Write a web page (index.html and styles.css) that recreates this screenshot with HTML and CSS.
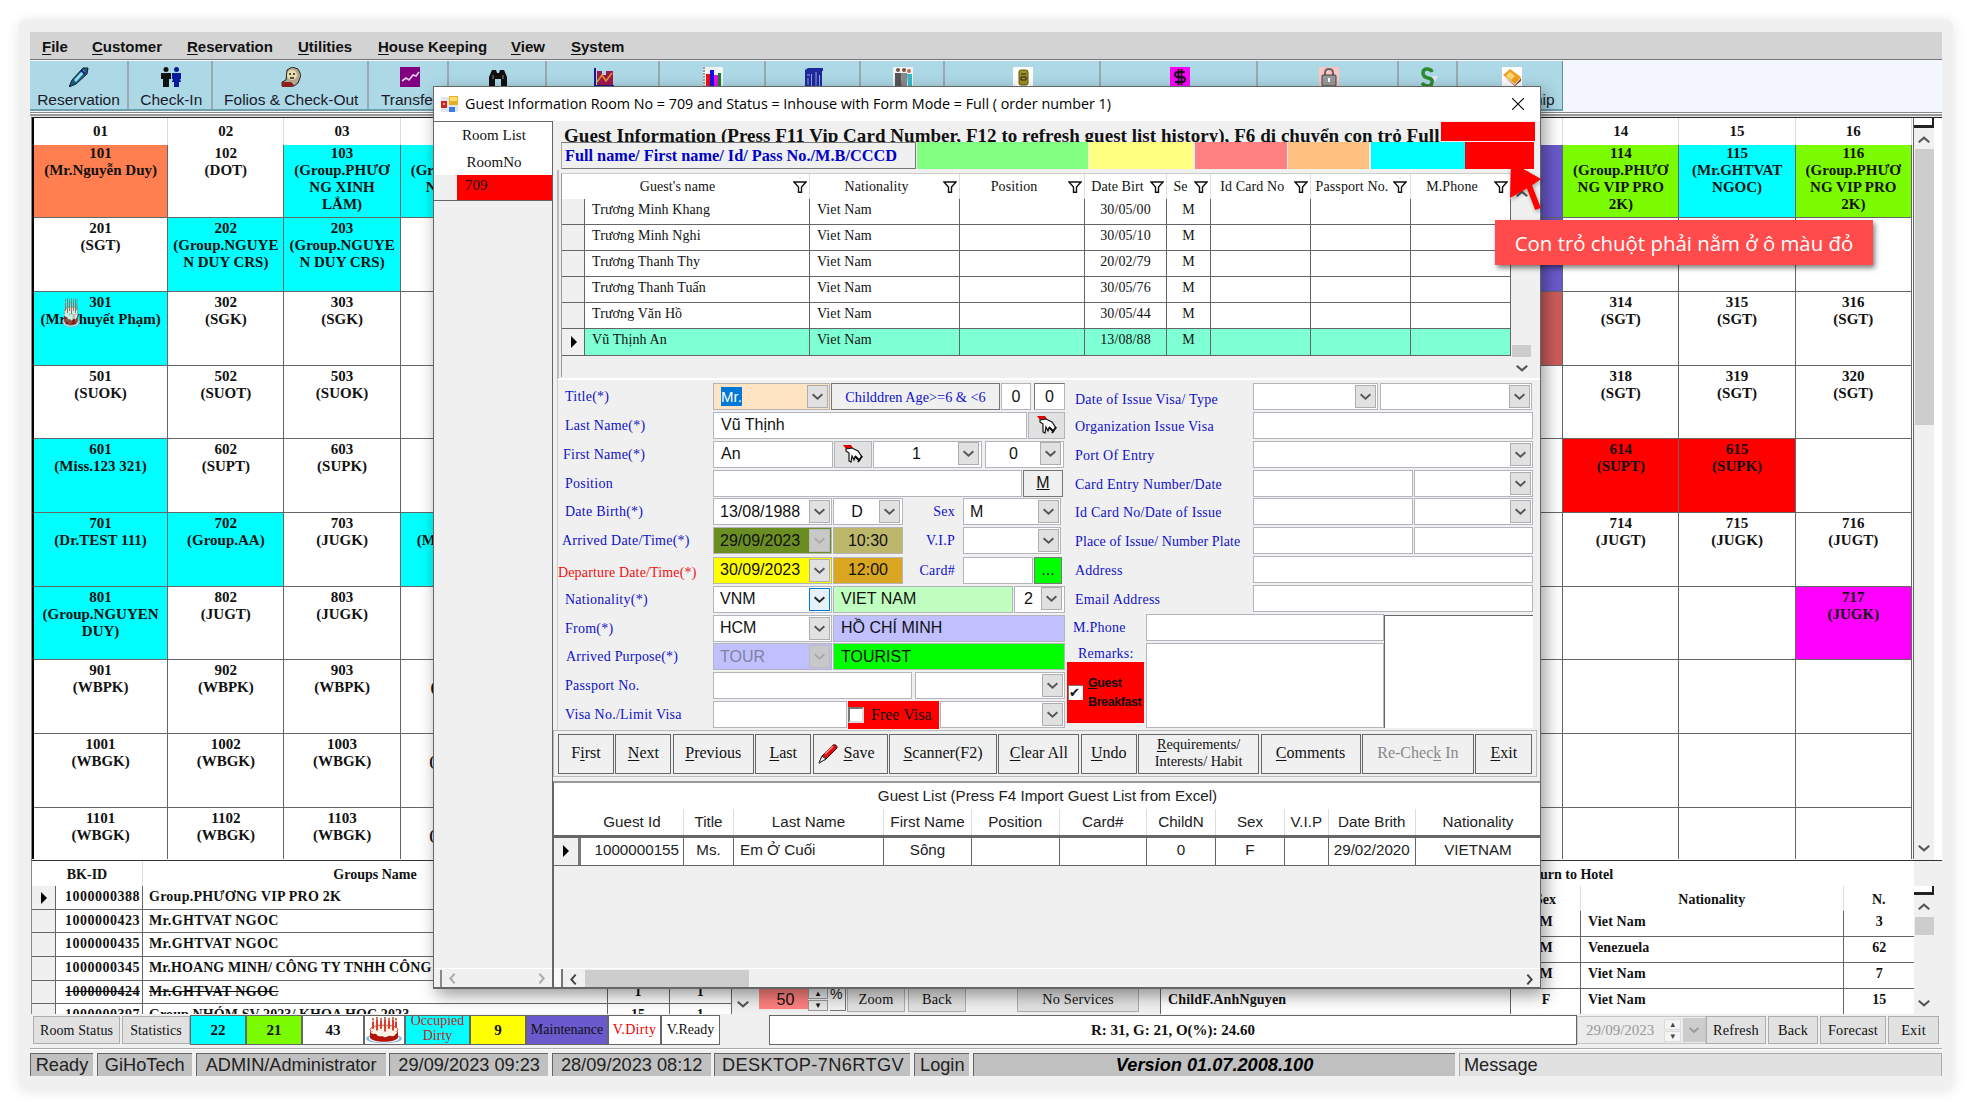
FILE: index.html
```html
<!DOCTYPE html>
<html lang="vi">
<head>
<meta charset="utf-8">
<title>GiHoTech - Guest Information</title>
<link rel="stylesheet" href="styles.css">
</head>
<body>
<svg class="defs" aria-hidden="true">
  <symbol id="chev" viewBox="0 0 12 12"><path d="M1.5 4l4.5 4 4.5-4" fill="none" stroke="currentColor" stroke-width="1.8"/></symbol>
  <symbol id="funnel" viewBox="0 0 14 12"><path d="M1 1h12L8.500 6v5.300h-3V6z" fill="#fff" stroke="#111" stroke-width="1.400"/></symbol>
  <symbol id="tri" viewBox="0 0 8 12"><path d="M1 0l6 6-6 6z" fill="#000"/></symbol>
  <symbol id="hand" viewBox="0 0 20 18"><path d="M0 0h8l2 3-7 1z" fill="#e00000"/><path d="M3 4l6-1 6 3 4 6-3 3-4-3-1 3-2-4-1 6-2-1V8L3 6z" fill="#fff" stroke="#111" stroke-width="1.200"/><path d="M12 11l5 5M19 11l-4 6" stroke="#111" stroke-width="1.800"/></symbol>
  <symbol id="cake" viewBox="0 0 36 30" preserveAspectRatio="none"><ellipse cx="18" cy="24" rx="18" ry="5.500" fill="#8fb9dc"/><ellipse cx="18" cy="23.500" rx="15" ry="5" fill="#fff"/><path d="M4 14v9c3 6 25 6 28 0v-9z" fill="#b31408"/><ellipse cx="18" cy="14" rx="14" ry="5" fill="#fff3e6" stroke="#c0533a"/><path d="M4 16c3 5 5 1 7 4s5 0 7 2 4-2 7-1 4-1 7-5" fill="#fff3e6"/><path d="M7 13V5M11 15V3M15 13V4M19 16V3M23 13V4M27 15V3M30 12V5" stroke="#e23a2c" stroke-width="2"/><path d="M7 4V1M11 3V0M15 4V1M19 3V0M23 4V1M27 3V0M30 4V1" stroke="#b5482c" stroke-width="1.500"/></symbol>
</svg>
<div class="frame">
<div class="app">
  <nav class="menu"><span><u>F</u>ile</span><span><u>C</u>ustomer</span><span><u>R</u>eservation</span><span><u>U</u>tilities</span><span><u>H</u>ouse Keeping</span><span><u>V</u>iew</span><span><u>S</u>ystem</span></nav>
  <div class="toolwrap">
    <div class="tools">
      <div><svg viewBox="0 0 20 20"><path d="M0 20l3-7L14 1l5 0-1 6L7 17z" fill="#1c5f7a" stroke="#123"/><path d="M5 13l9-10 2 2-9 10z" fill="#8fe0ee"/><path d="M12 3l4 4" stroke="#1a1a8c" stroke-width="2"/></svg>Reservation</div>
      <div><svg viewBox="0 0 20 20"><circle cx="5" cy="2.500" r="2.500" fill="#111"/><path d="M0 6h10v6H8v8H2v-8H0z" fill="#111"/><circle cx="15.500" cy="2.500" r="2.500" fill="#0a1a9c"/><path d="M11 6h9v6h-1l1 3h-2v5h-5v-5h-2l1-3h-1z" fill="#0a1a9c"/></svg>Check-In</div>
      <div><svg viewBox="0 0 20 20"><path d="M6 3l5-3 6 2 3 6-3 8-4 3H1v-4l4-2z" fill="#b9a58c" stroke="#222"/><circle cx="11" cy="8" r="5" fill="#e8dfb0"/><path d="M8 7h2M12 7h2M9 11h4" stroke="#222" stroke-width="1.500"/><path d="M1 15h9l3 3-2 2H1z" fill="#8c2020"/></svg>Folios &amp; Check-Out</div>
      <div><svg viewBox="0 0 20 20"><path d="M0 0h20v20H0z" fill="#800080"/><path d="M2 14l4-3 3 2 4-5 3 1 3-4" fill="none" stroke="#e6d0e6" stroke-width="1.600"/></svg>Transfer</div>
      <div><svg viewBox="0 0 20 20"><path d="M1 20V10l3-7h4l1 3h2l1-3h4l3 7v10h-6v-8H7v8z" fill="#111"/><path d="M5 8v4M15 8v4" stroke="#888"/></svg></div>
      <div><svg viewBox="0 0 20 20"><path d="M1 1v18h19" fill="none" stroke="#1a1a8c" stroke-width="2"/><path d="M3 4h5v14H3zM8 8h4v10H8zM12 4h7v14h-7z" fill="#a01850"/><path d="M3 15l5-7 4 6 6-8" fill="none" stroke="#e0a020" stroke-width="1.500"/></svg></div>
      <div><svg viewBox="0 0 20 20"><path d="M0 0h20v20H0z" fill="#f4f4f4"/><path d="M3 7h4v13H3z" fill="#f01010"/><path d="M7 3h4v17H7z" fill="#1010f0"/><path d="M11 8h4v12h-4z" fill="#f010e0"/><path d="M15 6h3v14h-3z" fill="#108030"/><path d="M1 0v20" stroke="#444" stroke-dasharray="2 1"/></svg></div>
      <div><svg viewBox="0 0 20 20"><path d="M1 3l3-2h15v3h-1v16H1V8z" fill="#1c2a9c"/><path d="M3 8h3M7.500 7v13M12 5v15M15.500 8v12M4 11v7" stroke="#93a4e6"/></svg></div>
      <div><svg viewBox="0 0 20 20"><path d="M0 0h20v20H0z" fill="#eef4f4"/><circle cx="5" cy="3" r="2" fill="#7a5040"/><path d="M2 6h6l1 14H2z" fill="#555"/><circle cx="11" cy="3" r="2" fill="#7a5040"/><path d="M8 6h6v14H9z" fill="#8a8a8a"/><circle cx="16" cy="4" r="2" fill="#c07050"/><path d="M14 7h5v12h-4z" fill="#38b8c8"/></svg></div>
      <div><svg viewBox="0 0 20 20"><path d="M0 0h20v20H0z" fill="#fff"/><rect x="6" y="3" width="9" height="15" rx="2" fill="#a09020" stroke="#5c5410"/><path d="M8 7h5M8 10h5v3H8z" stroke="#222" fill="none"/></svg></div>
      <div><svg viewBox="0 0 20 20"><path d="M0 0h20v20H0z" fill="#f0f"/><path d="M15 5H8Q5 5 5 7.500T8 10h4q3 0 3 2.500T12 15H5M8.500 2v16M11.500 2v16" fill="none" stroke="#111" stroke-width="1.800"/></svg></div>
      <div><svg viewBox="0 0 20 20"><path d="M0 0h20v20H0z" fill="#ffc4c4"/><path d="M6 10V6q0-4 4-4t4 4v4" fill="none" stroke="#666" stroke-width="2"/><rect x="3" y="8" width="14" height="11" rx="1" fill="#999" stroke="#444"/><path d="M10 11v4" stroke="#fff" stroke-width="2"/></svg></div>
      <div><svg viewBox="0 0 20 20"><path d="M13 5q-1-3-5-3-4 0-4 4t5 5 4 4q0 4-4 4-4 0-6-3" fill="none" stroke="#2f8a2f" stroke-width="3.500"/><path d="M13 9h6l-3 6z" fill="#dfe9ee"/></svg></div>
      <div><svg viewBox="0 0 20 20"><path d="M0 0h20v20H0z" fill="#fff"/><path d="M1 8l7-6 11 8-6 7z" fill="#f0a020"/><path d="M4 9l4-4 5 4-4 4z" fill="#ffd870"/><path d="M2 10l11 8 6-7v3l-6 5z" fill="#8a4a20"/></svg>Membership</div>
    </div>
  </div>
  <div class="divider"></div>

  <section class="board">
    <div class="rooms">
      <b class="h">01</b><b class="h">02</b><b class="h">03</b><b class="h"></b><b class="h c13"></b><b class="h">14</b><b class="h">15</b><b class="h">16</b>
      <b class="top coral">101<br>(Mr.Nguyễn Duy)</b><b class="top">102<br>(DOT)</b><b class="top cyan">103<br>(Group.PHƯƠ<br>NG XINH<br>LẮM)</b><b class="top cyan lft">&nbsp;<br>(Group.<br><span>NG</span></b><b class="c13 slate"></b><b class="top lawn">114<br>(Group.PHƯƠ<br>NG VIP PRO<br>2K)</b><b class="top cyan">115<br>(Mr.GHTVAT<br>NGOC)</b><b class="top lawn">116<br>(Group.PHƯƠ<br>NG VIP PRO<br>2K)</b>
      <b>201<br>(SGT)</b><b class="cyan">202<br>(Group.NGUYE<br>N DUY CRS)</b><b class="cyan">203<br>(Group.NGUYE<br>N DUY CRS)</b><b></b><b class="c13 slate"></b><b></b><b></b><b>216<br>(SGT)</b>
      <b class="cyan bday"><svg preserveAspectRatio="none"><use href="#cake"/></svg>301<br>(Mr.Thuyết Phạm)</b><b>302<br>(SGK)</b><b>303<br>(SGK)</b><b></b><b class="c13 indian"></b><b>314<br>(SGT)</b><b>315<br>(SGT)</b><b>316<br>(SGT)</b>
      <b>501<br>(SUOK)</b><b>502<br>(SUOT)</b><b>503<br>(SUOK)</b><b></b><b class="c13"></b><b>318<br>(SGT)</b><b>319<br>(SGT)</b><b>320<br>(SGT)</b>
      <b class="cyan">601<br>(Miss.123 321)</b><b>602<br>(SUPT)</b><b>603<br>(SUPK)</b><b></b><b class="c13"></b><b class="red">614<br>(SUPT)</b><b class="red">615<br>(SUPK)</b><b></b>
      <b class="cyan">701<br>(Dr.TEST 111)</b><b class="cyan">702<br>(Group.AA)</b><b>703<br>(JUGK)</b><b class="cyan lft mr"><br>(M</b><b class="c13"></b><b>714<br>(JUGT)</b><b>715<br>(JUGK)</b><b>716<br>(JUGT)</b>
      <b class="cyan">801<br>(Group.NGUYEN<br>DUY)</b><b>802<br>(JUGT)</b><b>803<br>(JUGK)</b><b></b><b class="c13"></b><b></b><b></b><b class="magenta">717<br>(JUGK)</b>
      <b>901<br>(WBPK)</b><b>902<br>(WBPK)</b><b>903<br>(WBPK)</b><b>904<br>(WBPK)</b><b class="c13"></b><b></b><b></b><b></b>
      <b>1001<br>(WBGK)</b><b>1002<br>(WBGK)</b><b>1003<br>(WBGK)</b><b>1004<br>(WBGK)</b><b class="c13"></b><b></b><b></b><b></b>
      <b>1101<br>(WBGK)</b><b>1102<br>(WBGK)</b><b>1103<br>(WBGK)</b><b>1104<br>(WBGK)</b><b class="c13"></b><b></b><b></b><b></b>
    </div>
    <div class="vbar board-bar"><i class="notch"></i><svg class="up"><use href="#chev"/></svg><i class="thumb"></i><svg class="down"><use href="#chev"/></svg></div>
  </section>

  <section class="lists">
    <div class="groups">
      <div class="gh"><b>BK-ID</b><b>Groups Name</b></div>
      <div class="gr"><i><svg><use href="#tri"/></svg></i><b>1000000388</b><b class="w1">Group.PHƯƠNG VIP PRO 2K</b><b></b><b></b></div>
      <div class="gr"><i></i><b>1000000423</b><b class="w2">Mr.GHTVAT NGOC</b><b></b><b></b></div>
      <div class="gr"><i></i><b>1000000435</b><b class="w2">Mr.GHTVAT NGOC</b><b></b><b></b></div>
      <div class="gr"><i></i><b>1000000345</b><b class="w3">Mr.HOANG MINH/ CÔNG TY TNHH CÔNG</b><b></b><b></b></div>
      <div class="gr"><i></i><b><s>1000000424</s></b><b class="w2"><s>Mr.GHTVAT NGOC</s></b><b>1</b><b>1</b></div>
      <div class="gr"><i></i><b>1000000397</b><b class="w3">Group.NHÓM SV 2023/ KHOA HOC 2023</b><b>15</b><b>1</b></div>
    </div>
    <div class="mid">
      <svg class="down"><use href="#chev"/></svg>
      <span class="num">50</span><span class="spin"><i>▴</i><i>▾</i></span><span class="pct">%</span>
      <span class="btn zoom">Zoom</span><span class="btn back">Back</span><span class="btn nos">No Services</span>
    </div>
    <div class="hotel">
      <div class="ht">Return to Hotel</div>
      <div class="hh"><b></b><b>Sex</b><b>Nationality</b><b>N.</b></div>
      <div class="hr"><b></b><b>M</b><b>Viet Nam</b><b>3</b></div>
      <div class="hr"><b></b><b>M</b><b>Venezuela</b><b>62</b></div>
      <div class="hr"><b></b><b>M</b><b>Viet Nam</b><b>7</b></div>
      <div class="hr"><b>ChildF.AnhNguyen</b><b>F</b><b>Viet Nam</b><b>15</b></div>
    </div>
    <div class="vbar hotel-bar"><i class="notch"></i><svg class="up"><use href="#chev"/></svg><i class="thumb"></i><svg class="down"><use href="#chev"/></svg></div>
  </section>

  <div class="strip">
    <span class="btn s1">Room Status</span><span class="btn s2">Statistics</span><b class="lg cyan">22</b><b class="lg lawn">21</b><b class="lg w43">43</b><span class="lg cakebox"><svg><use href="#cake"/></svg></span><span class="lg occ cyan">Occupied<br>Dirty</span><b class="lg yel">9</b><span class="lg mnt slate">Maintenance</span><span class="lg vd">V.Dirty</span><span class="lg vr">V.Ready</span>
    <b class="lg sum">R: 31, G: 21, O(%): 24.60</b>
    <span class="datebox">29/09/2023<span class="spin"><i>▴</i><i>▾</i></span><em><svg><use href="#chev"/></svg></em></span>
    <span class="btn s3">Refresh</span><span class="btn s4">Back</span><span class="btn s5">Forecast</span><span class="btn s6">Exit</span>
  </div>
  <div class="status"><span>Ready</span><span>GiHoTech</span><span>ADMIN/Administrator</span><span>29/09/2023 09:23</span><span>28/09/2023 08:12</span><span class="desk">DESKTOP-7N6RTGV</span><span>Login</span><span class="ver">Version 01.07.2008.100</span><span class="msg">Message</span></div>
</div>
</div>

<div class="window">
  <header class="title">
    <svg class="appicon" viewBox="0 0 18 17"><path d="M0 1h17v15H0z" fill="#dfe6ee"/><path d="M0 5h6v7H0z" fill="#c8281e"/><path d="M8 0h9v9H8z" fill="#e8b020"/><path d="M9 1h7v4H9z" fill="#ffe070"/><path d="M8 11h6v5H8z" fill="#3d7be0"/><path d="M2 7h2v2H2z" fill="#ff9a8a"/></svg>
    <span>Guest Information Room No = 709 and Status = Inhouse with Form Mode = Full ( order number 1)</span>
    <svg class="close" viewBox="0 0 12 12"><path d="M0 0l12 12M12 0L0 12" stroke="#000" stroke-width="1.100"/></svg>
  </header>
  <div class="wbody">
    <aside class="roomlist">
      <div>Room List</div><div>RoomNo</div>
      <div class="sel"><i></i><span>709</span></div>
      <div class="hb"><i></i><svg class="l"><use href="#chev"/></svg><svg class="r"><use href="#chev"/></svg></div>
    </aside>
    <main class="main">
      <div class="heading"><b>Guest Information (Press F11 Vip Card Number, F12 to refresh guest list history), F6 di chuyển con trỏ Full</b><i></i></div>
      <div class="search"><b>Full name/ First name/ Id/ Pass No./M.B/CCCD</b><i></i><i></i><i></i><i></i><i></i><i></i></div>
      <div class="histbox">
        <div class="hist">
          <div class="row head"><span>Guest's name<svg><use href="#funnel"/></svg></span><span>Nationality<svg><use href="#funnel"/></svg></span><span>Position<svg><use href="#funnel"/></svg></span><span>Date Birt<svg><use href="#funnel"/></svg></span><span>Se<svg><use href="#funnel"/></svg></span><span>Id Card No<svg><use href="#funnel"/></svg></span><span>Passport No.<svg><use href="#funnel"/></svg></span><span>M.Phone<svg><use href="#funnel"/></svg></span></div>
          <div class="row"><i></i><span>Trương Minh Khang</span><span>Viet Nam</span><span></span><span>30/05/00</span><span>M</span><span></span><span></span><span></span></div>
          <div class="row"><i></i><span>Trương Minh Nghi</span><span>Viet Nam</span><span></span><span>30/05/10</span><span>M</span><span></span><span></span><span></span></div>
          <div class="row"><i></i><span>Trương Thanh Thy</span><span>Viet Nam</span><span></span><span>20/02/79</span><span>M</span><span></span><span></span><span></span></div>
          <div class="row"><i></i><span>Trương Thanh Tuấn</span><span>Viet Nam</span><span></span><span>30/05/76</span><span>M</span><span></span><span></span><span></span></div>
          <div class="row"><i></i><span>Trương Văn Hồ</span><span>Viet Nam</span><span></span><span>30/05/44</span><span>M</span><span></span><span></span><span></span></div>
          <div class="row cur"><i><svg><use href="#tri"/></svg></i><span>Vũ Thịnh An</span><span>Viet Nam</span><span></span><span>13/08/88</span><span>M</span><span></span><span></span><span></span></div>
        </div>
        <div class="vbar hist-bar"><svg class="up"><use href="#chev"/></svg><i class="thumb"></i><svg class="down"><use href="#chev"/></svg></div>
      </div>

      <div class="forms">
        <div class="left">
          <div class="fr r1"><label>Title(*)</label><span class="f peach combo"><mark>Mr.</mark><em><svg><use href="#chev"/></svg></em></span><span class="f box">Childdren Age&gt;=6 &amp; &lt;6</span><span class="f c">0</span><span class="f c deep">0</span></div>
          <div class="fr r2"><label>Last Name(*)</label><span class="f">Vũ Thịnh</span><span class="f ib"><svg><use href="#hand"/></svg></span></div>
          <div class="fr r3"><label class="o2">First Name(*)</label><span class="f">An</span><span class="f ib"><svg><use href="#hand"/></svg></span><span class="f combo c">1<em><svg><use href="#chev"/></svg></em></span><span class="f combo c ml">0<em><svg><use href="#chev"/></svg></em></span></div>
          <div class="fr r4"><label>Position</label><span class="f"></span><span class="f box m"><u>M</u></span></div>
          <div class="fr r5"><label>Date Birth(*)</label><span class="f combo">13/08/1988<em><svg><use href="#chev"/></svg></em></span><span class="f combo c">D<em><svg><use href="#chev"/></svg></em></span><label class="ra">Sex</label><span class="f combo">M<em><svg><use href="#chev"/></svg></em></span></div>
          <div class="fr r5 tall"><label class="o3">Arrived Date/Time(*)</label><span class="f combo olive dis">29/09/2023<em><svg><use href="#chev"/></svg></em></span><span class="f c khaki">10:30</span><label class="ra">V.I.P</label><span class="f combo"><em><svg><use href="#chev"/></svg></em></span></div>
          <div class="fr r7"><label class="dep">Departure Date/Time(*)</label><span class="f combo yel">30/09/2023<em><svg><use href="#chev"/></svg></em></span><span class="f c gold">12:00</span><label class="ra">Card#</label><span class="f"></span><span class="f box green">...</span></div>
          <div class="fr r8"><label>Nationality(*)</label><span class="f combo hot">VNM<em><svg><use href="#chev"/></svg></em></span><span class="f mint">VIET NAM</span><span class="f combo c">2<em><svg><use href="#chev"/></svg></em></span></div>
          <div class="fr r9"><label>From(*)</label><span class="f combo">HCM<em><svg><use href="#chev"/></svg></em></span><span class="f lav">HỒ CHÍ MINH</span></div>
          <div class="fr r9"><label class="o4">Arrived Purpose(*)</label><span class="f combo lav dis gt">TOUR<em><svg><use href="#chev"/></svg></em></span><span class="f green">TOURIST</span></div>
          <div class="fr r11"><label>Passport No.</label><span class="f"></span><span class="f combo ml"><em><svg><use href="#chev"/></svg></em></span></div>
          <div class="fr r12"><label>Visa No./Limit Visa</label><span class="f"></span><span class="free"><i></i>Free Visa</span><span class="f combo"><em><svg><use href="#chev"/></svg></em></span></div>
        </div>
        <div class="right">
          <div class="fr q1"><label>Date of Issue Visa/ Type</label><span class="f combo"><em><svg><use href="#chev"/></svg></em></span><span class="f combo"><em><svg><use href="#chev"/></svg></em></span></div>
          <div class="fr q2"><label>Organization Issue Visa</label><span class="f"></span></div>
          <div class="fr q2"><label>Port Of Entry</label><span class="f combo"><em><svg><use href="#chev"/></svg></em></span></div>
          <div class="fr q4"><label>Card Entry Number/Date</label><span class="f"></span><span class="f combo"><em><svg><use href="#chev"/></svg></em></span></div>
          <div class="fr q4"><label>Id Card No/Date of Issue</label><span class="f"></span><span class="f combo"><em><svg><use href="#chev"/></svg></em></span></div>
          <div class="fr q4"><label class="tight">Place of Issue/ Number Plate</label><span class="f"></span><span class="f"></span></div>
          <div class="fr q2"><label>Address</label><span class="f"></span></div>
          <div class="fr q2"><label>Email Address</label><span class="f"></span></div>
          <div class="notes">
            <div class="nl"><label>M.Phone</label><label class="rem">Remarks:</label><div class="bf"><i>✔</i><b><u>G</u>uest<br>Breakfast</b></div></div>
            <div class="nm"><span class="f"></span><span class="f"></span></div>
            <div class="np"></div>
          </div>
        </div>
      </div>

      <div class="actions"><span>F<u>i</u>rst</span><span><u>N</u>ext</span><span><u>P</u>revious</span><span><u>L</u>ast</span><span class="save"><svg viewBox="0 0 20 20"><path d="M1 19l3-7L15 1q4-1 4 3L8 15z" fill="#e01010" stroke="#300"/><path d="M1 19l3-7 4 3z" fill="#eee" stroke="#333"/><path d="M7 10l8-8" stroke="#ff9090" stroke-width="1.500"/></svg><u>S</u>ave</span><span><u>S</u>canner(F2)</span><span><u>C</u>lear All</span><span><u>U</u>ndo</span><span class="two"><u>R</u>equirements/<br>Interests/ Habit</span><span><u>C</u>omments</span><span class="off">Re-Chec<u>k</u> In</span><span><u>E</u>xit</span></div>

      <div class="glist">
        <div class="gt-title">Guest List (Press F4 Import Guest List from Excel)</div>
        <div class="g ghead"><i></i><span>Guest Id</span><span>Title</span><span>Last Name</span><span>First Name</span><span>Position</span><span>Card#</span><span>ChildN</span><span>Sex</span><span>V.I.P</span><span>Date Brith</span><span>Nationality</span></div>
        <div class="g grow"><i><svg><use href="#tri"/></svg></i><span>1000000155</span><span>Ms.</span><span>Em Ở Cuối</span><span>Sông</span><span></span><span></span><span>0</span><span>F</span><span></span><span>29/02/2020</span><span>VIETNAM</span></div>
        <div class="hb2"><i></i><svg class="l"><use href="#chev"/></svg><b></b><svg class="r"><use href="#chev"/></svg></div>
      </div>
    </main>
  </div>
</div>

<svg class="arrow" viewBox="0 0 34 52"><path d="M19 22l10 26" stroke="#f00" stroke-width="6"/><path d="M2 1l30 17-10 7-21 12z" fill="#f00"/></svg>
<div class="callout">Con trỏ chuột phải nằm ở ô màu đỏ</div>
</body>
</html>
```
FILE: styles.css
```css
* { box-sizing: border-box; }
body { margin: 0; width: 1972px; height: 1108px; overflow: hidden; background: #fff; color: #111; font-family: "Liberation Serif", "Times New Roman", serif; position: relative; padding: 19px; }
i, em { font-style: normal; }
.defs { position: absolute; width: 0; height: 0; }
svg { display: block; flex: none; }
.frame { width: 1934px; height: 1070px; background: #f0f0f0; border-radius: 8px; box-shadow: 0 2px 14px #e4e4e4; padding: 13px 11px; }
.app { width: 1912px; height: 1044px; display: flex; flex-direction: column; overflow: hidden; }

.menu { height: 28px; background: #d3d3d3; border-bottom: 1px solid #777; display: grid; grid-template-columns: 50px 95px 111px 80px 133px 60px 100px; padding-left: 12px; font: bold 15px/29px "Liberation Sans", Arial, sans-serif; white-space: nowrap; }
.menu u { text-underline-offset: 2px; }
.toolwrap { height: 52px; background: #f4f7fd; padding-top: 1px; }
.tools { width: 1533px; height: 50px; background: #add8e6; border-bottom: 2px solid #6f9fae; border-right: 1px solid #5f8f9e; display: grid; grid-template-columns: 99px 83.5px 156.5px 80px 97.5px 113px 106px 95px 84px 156px 157.5px 140.5px 59.5px 105px; font: 15.5px/19px "Liberation Sans", Arial, sans-serif; color: #1a1a2a; }
.tools div { border-right: 2px solid #9aa8b0; padding: 6px 0 0 3px; display: flex; flex-direction: column; align-items: center; gap: 3px; white-space: nowrap; }
.tools div:first-child { padding-left: 0; }
.tools div:last-child { border-right: 0; }
.tools svg { width: 20px; height: 20px; }
.divider { height: 5px; background: linear-gradient(#888 0 1px, #fff 1px 2px, #999 2px 4px, #e8e8e8 4px); }

.board { height: 744px; display: flex; border-top: 1px solid #222; border-bottom: 1px solid #333; border-left: 1px solid #888; margin-left: 1px; background: #fff; }
.rooms { width: 1882px; height: 741px; overflow: hidden; border-left: 2px solid #000; border-right: 1px solid #666; display: grid; grid-template-columns: 134.2px repeat(3, 116.25px) 930px repeat(4, 116.25px); grid-template-rows: 26.500px repeat(10, 73.700px); font-size: 15px; line-height: 17px; text-align: center; }
.rooms b { border-right: 1.500px solid #666; border-bottom: 1.500px solid #666; padding-top: 2px; overflow: hidden; white-space: nowrap; }
.rooms .top { padding-top: 0; }
.rooms .h { border-bottom: 0; border-right-color: #ddd; padding-top: 5px; }
.rooms .c13 { grid-column: 6; }
.rooms .lft { text-align: left; padding-left: 10px; }
.lft span { margin-left: 15px; }
.rooms .mr { padding-left: 16px; }
.bday { position: relative; }
.bday svg { position: absolute; left: 28px; top: 6px; width: 18px; height: 30px; opacity: .75; }
.coral { background: #ff7f50; } .cyan { background: #0ff; } .lawn { background: #7cfc00; } .slate { background: #6a5acd; } .indian { background: #cd5c5c; } .red { background: #f00; } .magenta { background: #f0f; }

.vbar { display: flex; flex-direction: column; align-items: center; color: #555; background: #f0f0f0; }
.vbar svg, .mid > svg { width: 14px; height: 14px; stroke-width: 2; }
.up { transform: rotate(180deg); }
.vbar .down { margin-top: auto; }
.vbar .thumb { width: 19px; background: #cdcdcd; }
.notch { width: 20px; height: 10px; background: #fff; border: solid #222; border-width: 0 2px 3px 0; }
.board-bar { width: 20px; }
.board-bar .up { margin-top: 5px; } .board-bar .thumb { margin-top: 2px; height: 276px; } .board-bar .down { margin-bottom: 5px; }

.lists { height: 153px; display: flex; overflow: hidden; border-left: 1px solid #888; margin-left: 1px; font-size: 14px; }
.groups { width: 700px; background: #fff; overflow: hidden; white-space: nowrap; }
.gh { height: 25px; display: grid; grid-template-columns: 111px 464px; line-height: 27px; text-align: center; }
.gh b:first-child { border-right: 1px solid #ddd; }
.gr { height: 23.700px; display: grid; grid-template-columns: 24px 87px 464.500px 62px 62.500px; line-height: 22px; }
.gr > * { border-right: 1.500px solid #666; border-bottom: 1.500px solid #666; overflow: hidden; }
.gr i { background: #f0f0f0; }
.gr i svg { width: 8px; height: 12px; margin: 6px 0 0 8px; }
.gr b:nth-child(2) { text-align: right; padding-right: 2px; letter-spacing: .5px; }
.gr b:nth-child(3) { padding-left: 6px; }
.w1 { letter-spacing: .25px; } .w2 { letter-spacing: .35px; } .w3 { letter-spacing: .1px; }
.gr b:nth-child(n+4) { text-align: center; }
.mid { width: 428px; display: flex; align-items: flex-start; padding-top: 118px; height: 170px; }
.mid > svg { margin: 18px 9px 0 4px; color: #555; }
.mid .num { width: 49px; height: 32px; background: #ff8080; border-bottom: 2px solid #eee; text-align: center; font: 16px/24px "Liberation Sans", Arial, sans-serif; padding: 9px 0 0 4px; }
.spin { display: flex; flex-direction: column; gap: 1px; width: 20px; }
.spin i { height: 11px; background: #e8e8e8; border: 1px solid #999; font: 9px/9px "DejaVu Sans", sans-serif; text-align: center; }
.mid .spin { margin-top: 9px; }
.pct { width: 16px; height: 23px; margin: 9px 0 0 2px; border: solid #777; border-width: 0 1.500px 1.500px 0; font: 14px/13px "Liberation Sans", Arial, sans-serif; }
.btn { background: #e1e1e1; border: 1px solid #adadad; text-align: center; font-size: 14.300px; letter-spacing: .2px; white-space: nowrap; }
.mid .btn { height: 26px; margin-top: 7px; line-height: 25px; }
.zoom { width: 58px; margin-left: 1px; } .back { width: 58px; margin-left: 3px; } .nos { width: 122px; margin-left: 51px; }
.hotel { width: 754px; background: #fff; white-space: nowrap; }
.ht { height: 25px; line-height: 27px; font-weight: bold; padding-left: 359px; }
.hh, .hr { display: grid; grid-template-columns: 350px 70px 262.500px 71.500px; text-align: center; border-left: 1.500px solid #666; }
.hh { height: 25px; line-height: 27px; }
.hr { height: 26.100px; line-height: 22px; }
.hh b { border-right: 1.500px solid #ddd; }
.hr b { border-right: 1.500px solid #666; border-bottom: 1.500px solid #666; padding-left: 1px; }
.hr b:first-child, .hr b:nth-child(3) { text-align: left; padding-left: 7px; letter-spacing: .15px; }
.hotel-bar { width: 20px; }
.hotel-bar .notch { margin-top: 25px; height: 9px; }
.hotel-bar .up { margin-top: 5px; } .hotel-bar .thumb { margin-top: 3px; height: 18px; } .hotel-bar .down { margin-bottom: 4px; }

.strip { height: 35px; display: flex; padding: 1px 0 0 3px; border-bottom: 1px solid #aaa; font-size: 14px; line-height: 28px; white-space: nowrap; }
.strip .btn { height: 28px; line-height: 27px; margin: 1px 2px 0 0; }
.s1 { width: 87px; } .s2 { width: 68px; }
.s3 { width: 60px; } .s4 { width: 50px; } .s5 { width: 66px; } .s6 { width: 51px; }
.strip .s1, .strip .s2 { font-size: 14px; letter-spacing: .1px; }
.strip .s2 { margin-right: 0; }
.lg { width: 56px; height: 30px; border: 1.500px solid #666; text-align: center; overflow: hidden; }
.strip b.lg { font-size: 15px; }
.w43 { width: 62px; background: #fff; }
.cakebox { width: 41px; background: #fff; padding: 1px; }
.cakebox svg { width: 36px; height: 27px; }
.occ { width: 65px; color: #c81e1e; line-height: 15px; }
.occ::before { content: ""; display: block; margin-top: -3px; }
.yel { background: #ff0; }
.mnt { width: 82px; } .vd { width: 53px; color: #e00; background: #fff; letter-spacing: .3px; } .vr { width: 59px; background: #fff; }
.sum { width: 808px; margin-left: 49px; background: #fff; }
.datebox { width: 129px; height: 28px; margin-top: 1px; border: 1px solid #c4c4cc; background: #ececec; color: #999; padding-left: 8px; font-size: 15px; display: flex; align-items: center; }
.datebox .spin { margin-left: 10px; width: 18px; } .datebox .spin i { color: #444; border-color: #ddd; background: #f4f4f4; }
.datebox em { width: 22px; height: 24px; margin-left: 2px; background: #ccc; padding: 6px 5px; } .datebox svg { width: 12px; height: 12px; }
.status { height: 27px; padding-top: 3px; display: grid; grid-template-columns: 63px 95px 190px 158.500px 159px 196px 55px 482px 483px; column-gap: 3.800px; font: 18.200px/23px "Liberation Sans", Arial, sans-serif; border-top: 1px solid #fff; white-space: nowrap; color: #222; }
.status span { background: #c0c0c0; border: solid #666; border-width: 1.500px 0 0 1.500px; text-align: center; }
.status .desk { letter-spacing: .4px; }
.status .ver { font-weight: bold; font-style: italic; color: #000; }
.status .msg { background: #e1e1e1; border: 1px solid #aaa; text-align: left; padding-left: 4px; }

.window { position: absolute; left: 433px; top: 86px; width: 1108px; height: 903px; background: #f0f0f0; border: 1px solid #666; border-bottom: 2px solid #666; box-shadow: 4px 6px 16px rgba(0, 0, 0, .4); overflow: hidden; }
.title { height: 34px; background: #fff; display: flex; align-items: center; padding: 0 16px 0 7px; font: 14.300px/33px "Open Sans", "Segoe UI", sans-serif; white-space: nowrap; color: #000; }
.title span { margin-top: -1px; }
.appicon { width: 18px; height: 17px; margin-right: 6px; }
.close { width: 12px; height: 12px; margin-left: auto; }
.wbody { display: flex; height: 867px; }
.roomlist { width: 119px; background: #f0f0f0; border: solid #666; border-width: 1px 1px 0 0; display: flex; flex-direction: column; font-size: 15px; text-align: center; }
.roomlist > div { height: 26.500px; line-height: 27px; background: #fff; padding-left: 2px; }
.roomlist > .sel { height: 26px; display: flex; background: #f0f0f0; border-bottom: 1px solid #666; text-align: left; line-height: 21px; padding: 0; }
.sel i { width: 23px; } .sel span { flex: 1; background: #f00; padding-left: 8px; }
.roomlist > .hb { margin-top: auto; height: 20px; display: flex; align-items: center; background: #f0f0f0; border-top: 1px solid #fff; color: #aaa; padding: 0; }
.hb i { width: 8px; height: 18px; border-right: 2px solid #888; }
.hb svg, .hb2 svg { width: 13px; height: 13px; }
.l { transform: rotate(90deg); margin-left: 4px; } .r { transform: rotate(-90deg); margin-left: auto; margin-right: 4px; }
.main { width: 987px; padding-left: 5px; }
.heading { height: 21px; display: flex; padding: 1px 0 0 6px; overflow: hidden; font-size: 19px; line-height: 27px; white-space: nowrap; color: #111; }
.heading b { width: 877px; height: 20px; overflow: hidden; letter-spacing: .04px; }
.heading i { width: 94px; height: 19px; background: #f00; }
.search { height: 28px; display: grid; grid-template-columns: 354px 171px 104px 92px 81px 94px 68px; column-gap: 1.500px; margin-left: 3px; border-left: 0; }
.search b { border: 1.500px solid #777; border-left-color: #aaa; color: #0000c8; font-size: 16.300px; line-height: 25px; padding-left: 3px; white-space: nowrap; height: 27px; width: 355px; }
.search i { height: 27px; }
.search i:nth-of-type(1) { background: #80ff80; } .search i:nth-of-type(2) { background: #ffff80; } .search i:nth-of-type(3) { background: #ff8080; } .search i:nth-of-type(4) { background: #ffc080; } .search i:nth-of-type(5) { background: #0ff; } .search i:nth-of-type(6) { background: #f00; margin-left: -1.500px; }
.histbox { height: 210px; display: flex; margin-left: -1px; padding: 3px 0 1px 2px; border-left: 2px solid #bbb; border-bottom: 2px solid #fff; }
.hist { width: 950px; border-left: 1.500px solid #999; border-top: 1px solid #ccc; font-size: 14px; }
.row { height: 26.200px; display: grid; grid-template-columns: 23px 225px 150px 125px 82px 44px 99.500px 100px 100px; line-height: 22px; background: #fff; white-space: nowrap; letter-spacing: .1px; }
.row > * { border-right: 1.500px solid #666; border-bottom: 1.500px solid #666; }
.row i { background: #f0f0f0; } .row i svg { width: 8px; height: 12px; margin: 7px 0 0 8px; }
.row span:nth-child(2) { padding-left: 7px; } .row span:nth-child(3) { padding-left: 7px; }
.row span:nth-child(n+5) { text-align: center; }
.head { height: 24.500px; grid-template-columns: 248px 150px 125px 82px 44px 99.500px 100px 100px; line-height: 25px; }
.row.head span { padding: 0 2px 0 0; display: flex; align-items: center; justify-content: flex-end; border-bottom: 0; border-right-color: #ddd; text-align: center; }
.head svg { width: 14px; height: 12px; margin-left: auto; }
.head span::before { content: ""; margin-left: auto; }
.cur span { background: #7fffd4; }
.hist-bar { width: 21px; }
.hist-bar .up { margin-top: 14px; } .hist-bar .thumb { margin-top: 144px; height: 12px; } .hist-bar .down { margin-bottom: 2px; }

.forms { display: flex; height: 350px; padding-top: 3px; border-left: 1px solid #ccc; margin-left: -1px; }
.left { width: 509px; } .right { width: 469px; }
.fr { height: 28.850px; display: grid; column-gap: 1px; }
.tall { height: 29.700px; }
label { color: #1010c8; font-size: 14px; line-height: 28px; padding-left: 7px; letter-spacing: .25px; white-space: nowrap; }
.o2 { padding-left: 5px; } .o3 { padding-left: 4px; } .o4 { padding-left: 8px; letter-spacing: .2px; } label.dep { color: #f01010; padding-left: 0; line-height: 31px; letter-spacing: .15px; }
.ra { text-align: right; padding-right: 7px; }
.f { height: 27px; background: #fff; border: 1.500px solid #b4b4bc; font: 16px/24px "Liberation Sans", Arial, sans-serif; padding-left: 7px; white-space: nowrap; display: flex; align-items: center; min-width: 0; color: #111; }
.f.c { justify-content: center; padding-left: 0; }
.combo { position: relative; padding-left: 6px; }
.combo em { margin-left: auto; width: 21px; height: 23px; background: #e1e1e1; border: 1px solid #adadad; display: flex; align-items: center; justify-content: center; color: #555; margin-right: 1px; }
.combo.c em { margin-left: 0; position: absolute; right: 1px; top: .5px; }
.f.combo.c { padding-right: 22px; }
.combo em svg { width: 13px; height: 13px; }
.hot em { background: #e5f1fb; border: 1.500px solid #0078d7; color: #222; }
.dis em { background: #c8c8c8; color: #aaa; border-color: #bbb; } .gt { color: #8080a0; }
.peach { background: #ffe4c4; } .peach mark { background: #0078d7; color: #fff; line-height: 19px; margin-left: 1px; font-size: 15px; }
.box { background: #f0f0f0; border: 1.500px solid #777; justify-content: center; padding: 0; }
.r1 .box { color: #1010c8; font: 14.300px/24px "Liberation Serif", serif; }
.deep { margin-left: 2px; border-top-color: #777; border-left-color: #777; }
.ib { background: #e1e1e1; justify-content: center; padding: 0; } .ib svg { width: 20px; height: 18px; }
.olive { background: #6b8e23; } .khaki { background: #bdb76b; } .gold { background: #daa520; } .f.yel { background: #ff0; } .mint { background: #c0ffc0; } .lav { background: #c0c0ff; } .green { background: #0f0; }
.ml { margin-left: 2px; }
.m { font-size: 16px; }
.r1 { grid-template-columns: 154px 117px 169px 30px 33px; }
.r2 { grid-template-columns: 154px 314px 37px; }
.r3 { grid-template-columns: 154px 120px 38px 109px 81px; }
.r4 { grid-template-columns: 154px 309px 40px; }
.r5 { grid-template-columns: 154px 119px 70px 58px 98px; }
.r7 { grid-template-columns: 154px 119px 70px 58px 70px 28px; }
.r8 { grid-template-columns: 154px 119px 180px 51px; }
.r9 { grid-template-columns: 154px 119px 232px; }
.r11 { grid-template-columns: 154px 199px 152px; }
.r12 { grid-template-columns: 154px 134px 91px 125px; }
.free { height: 28px; background: #f00; font-size: 16px; line-height: 28px; display: flex; align-items: center; gap: 7px; }
.free i { width: 16px; height: 16px; background: #fff; border: 2px solid #777; border-right-color: #ddd; border-bottom-color: #ddd; }
.right label { padding-left: 8px; letter-spacing: .25px; line-height: 30px; }
.right .q1 label { line-height: 33px; }
.right label.tight { letter-spacing: .1px; }
.q1 { grid-template-columns: 185px 125px 153px; }
.q1 .f:last-child { margin-left: 1px; }
.q2 { grid-template-columns: 185px 280px; }
.q4 { grid-template-columns: 185px 160px 119px; }
.notes { height: 115px; display: grid; grid-template-columns: 79px 238px 149px; }
.nl label { display: block; padding-left: 6px; line-height: 27px; } .right .nl .rem { padding-left: 11px; line-height: 25px; height: 20px; } .right .nl label { line-height: 28px; height: 28px; }
.right .nl .rem { height: 20px; line-height: 23px; }
.bf { width: 77px; height: 61px; background: #f00; display: flex; align-items: center; gap: 5px; font: 13px/19px "Liberation Sans", Arial, sans-serif; color: #111; }
.bf i { width: 15px; height: 15px; margin: 1px 0 0 1px; background: #fff; border: solid #777; border-width: 1.500px 0 0 1.500px; font: bold 13px/13px "DejaVu Sans", sans-serif; flex: none; }
.bf b { font-size: 12.500px; letter-spacing: -.4px; padding-top: 2px; }
.nm { display: flex; flex-direction: column; gap: 2px; } .nm .f:last-child { height: 85px; }
.np { height: 113px; margin-top: 1px; background: #fff; border: solid #666; border-width: 1.500px 0 0 1.500px; }

.actions { height: 47px; margin: 0 3px 0 -5px; padding: 3px 0 0 4px; border: 1.500px solid #bbb; display: grid; grid-template-columns: 56px 56px 81px 56px 75px 108px 81px 56px 121px 100px 112px 57px; column-gap: 1.400px; font-size: 16px; white-space: nowrap; }
.actions span { height: 39.500px; border: 1.500px solid #666; text-align: center; line-height: 36px; }
.actions svg { width: 20px; height: 20px; display: inline-block; vertical-align: middle; margin-right: 6px; }
.actions .save { text-align: left; padding-left: 4px; }
.actions .two { font-size: 14.300px; line-height: 17px; padding-top: 1px; } .actions .off { color: #888; }
.actions u { text-underline-offset: 2px; }

.glist { height: 208px; margin: 4px 0 0 -5px; border-top: 2px solid #999; border-left: 1.500px solid #666; display: flex; flex-direction: column; font: 15.200px/26px "Liberation Sans", Arial, sans-serif; color: #222; }
.gt-title { background: #fff; text-align: center; height: 26px; padding-left: 1px; }
.g { display: grid; grid-template-columns: 27px 103px 50px 150px 88px 87.500px 87.500px 69px 69px 43.500px 87.500px 125px; text-align: center; white-space: nowrap; background: #fff; }
.ghead { height: 29px; border-bottom: 3px solid #666; } .ghead span { border-right: 1px solid #ddd; }
.grow { height: 28px; line-height: 24px; border-bottom: 1.500px solid #666; } .grow span { border-right: 1.500px solid #666; }
.grow i { background: #f0f0f0; border-right: 3px solid #777; } .grow svg { width: 8px; height: 12px; margin: 7px 0 0 8px; }
.grow span:nth-child(2) { text-align: right; padding-right: 4px; } .grow span:nth-child(4) { text-align: left; padding-left: 6px; }
.hb2 { margin-top: auto; height: 21px; display: flex; align-items: center; border-top: 1px solid #fff; color: #444; }
.hb2 i { width: 9px; height: 20px; border-right: 2px solid #777; background: #f8f8f8; } .hb2 b { width: 164px; height: 19px; background: #cdcdcd; margin-left: 5px; }

.callout { position: absolute; left: 1495px; top: 220px; width: 378px; height: 45px; background: #ff4b4b; color: #fff; font: 20.400px/47px "Open Sans", sans-serif; text-align: center; white-space: nowrap; box-shadow: 2px 3px 5px rgba(0, 0, 0, .5); }
.arrow { position: absolute; left: 1509px; top: 161px; width: 34px; height: 52px; filter: drop-shadow(1px 2px 2px rgba(0, 0, 0, .3)); }
```
